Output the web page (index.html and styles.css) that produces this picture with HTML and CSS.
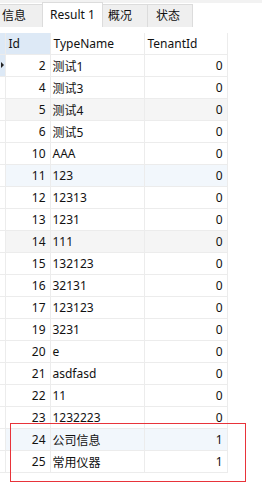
FILE: index.html
```html
<!DOCTYPE html>
<html lang="zh">
<head>
<meta charset="utf-8">
<title>Result 1</title>
<link rel="stylesheet" href="styles.css">
</head>
<body>
<div class="tabs">
    <div class="tab cut">信息</div>
    <div class="tab active">Result 1</div>
    <div class="tab">概况</div>
    <div class="tab">状态</div>
</div>

<div class="grid">
<table>
    <colgroup>
        <col class="c-gut">
        <col class="c-id">
        <col class="c-name">
        <col class="c-tenant">
    </colgroup>
    <tr class="head">
        <th class="gut"></th>
        <th class="id sel">Id</th>
        <th class="name">TypeName</th>
        <th class="tenant">TenantId</th>
    </tr>
    <tr><td class="gut cur"><span class="arrow"></span></td><td class="id">2</td><td class="name">测试1</td><td class="tenant">0</td></tr>
    <tr><td class="gut"></td><td class="id">4</td><td class="name">测试3</td><td class="tenant">0</td></tr>
    <tr class="alt"><td class="gut"></td><td class="id">5</td><td class="name">测试4</td><td class="tenant">0</td></tr>
    <tr><td class="gut"></td><td class="id">6</td><td class="name">测试5</td><td class="tenant">0</td></tr>
    <tr><td class="gut"></td><td class="id">10</td><td class="name">AAA</td><td class="tenant">0</td></tr>
    <tr class="hl"><td class="gut"></td><td class="id">11</td><td class="name">123</td><td class="tenant">0</td></tr>
    <tr><td class="gut"></td><td class="id">12</td><td class="name">12313</td><td class="tenant">0</td></tr>
    <tr><td class="gut"></td><td class="id">13</td><td class="name">1231</td><td class="tenant">0</td></tr>
    <tr class="alt"><td class="gut"></td><td class="id">14</td><td class="name">111</td><td class="tenant">0</td></tr>
    <tr><td class="gut"></td><td class="id">15</td><td class="name">132123</td><td class="tenant">0</td></tr>
    <tr><td class="gut"></td><td class="id">16</td><td class="name">32131</td><td class="tenant">0</td></tr>
    <tr><td class="gut"></td><td class="id">17</td><td class="name">123123</td><td class="tenant">0</td></tr>
    <tr><td class="gut"></td><td class="id">19</td><td class="name">3231</td><td class="tenant">0</td></tr>
    <tr><td class="gut"></td><td class="id">20</td><td class="name">e</td><td class="tenant">0</td></tr>
    <tr><td class="gut"></td><td class="id">21</td><td class="name">asdfasd</td><td class="tenant">0</td></tr>
    <tr><td class="gut"></td><td class="id">22</td><td class="name">11</td><td class="tenant">0</td></tr>
    <tr><td class="gut"></td><td class="id">23</td><td class="name">1232223</td><td class="tenant">0</td></tr>
    <tr class="hl"><td class="gut"></td><td class="id">24</td><td class="name">公司信息</td><td class="tenant">1</td></tr>
    <tr><td class="gut"></td><td class="id">25</td><td class="name">常用仪器</td><td class="tenant">1</td></tr>
</table>
<div class="mark"></div>
</div>
</body>
</html>
```

FILE: styles.css
```css
html, body {
    min-height: 489px;
}

body {
    margin: 0;
    background: #fff;
    font-family: "Noto Sans", "Noto Sans CJK SC", sans-serif;
    font-size: 12px;
    color: #111;
}

.tabs {
    display: flex;
    align-items: flex-end;
    height: 27px;
    background: linear-gradient(#f2f2f2 0, #f2f2f2 3px, #fff 3px);
}

.tab {
    box-sizing: border-box;
    height: 23px;
    width: 46px;
    padding-left: 5px;
    line-height: 22px;
    background: #efefef;
    border: 1px solid #dcdcdc;
    border-bottom: 0;
    margin-right: -1px;
}

.tab.cut {
    width: 43px;
    padding-left: 2px;
    border-left: 0;
}

.tab.active {
    width: 61px;
    height: 25px;
    background: #fff;
    line-height: 24px;
    padding-left: 7px;
    position: relative;
    z-index: 1;
}

.tab:last-child { padding-left: 8px; }

.grid {
    position: relative;
    margin-top: 6px;
    padding-bottom: 16px;
}

table {
    border-collapse: collapse;
    table-layout: fixed;
    width: 227px;
}

.c-gut { width: 5px; }
.c-id { width: 45px; }
.c-name { width: 94px; }
.c-tenant { width: 83px; }

td, th {
    height: 21px;
    padding: 0;
    border: 1px solid #ececec;
    font-weight: normal;
    white-space: nowrap;
    overflow: hidden;
}

th {
    text-align: left;
    padding-left: 3px;
    border-top: 0;
}

.gut { border-left: 0; padding: 0; }
th.gut { background: #dde9f6; padding: 0; }
td.cur { background: #dde9f6; position: relative; }

.arrow {
    position: absolute;
    left: 1px;
    top: 7px;
    border-left: 3px solid #222;
    border-top: 3px solid transparent;
    border-bottom: 3px solid transparent;
}

td.id { text-align: right; padding-right: 4px; }
th.sel { background: #dde9f6; }
td.name { padding-left: 2px; }
td.tenant { text-align: right; padding-right: 4px; }

tr.alt td { background: #f5f5f5; }
tr.hl td { background: #f2f7fc; }
tr.alt td.gut, tr.hl td.gut { background: #fff; }

.mark {
    position: absolute;
    left: 10px;
    top: 390px;
    width: 234px;
    height: 57px;
    border: 1px solid #e8333a;
}
```
